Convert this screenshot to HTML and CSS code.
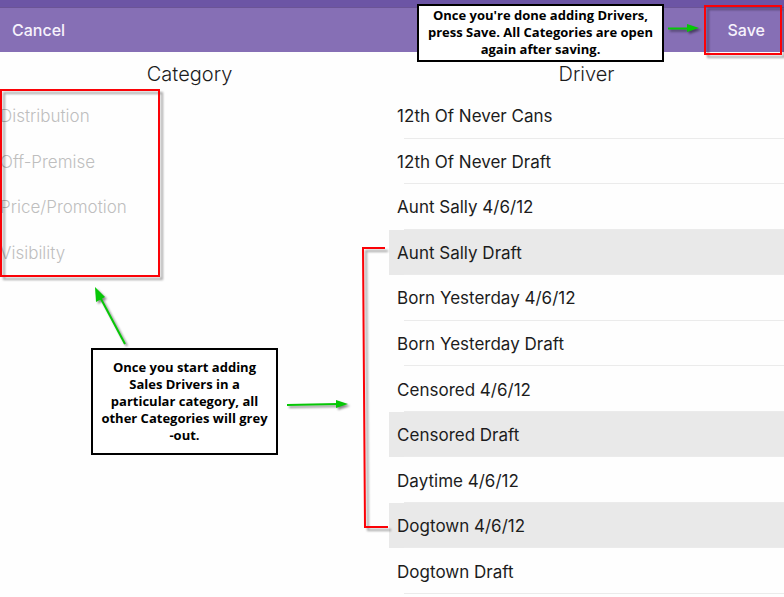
FILE: index.html
```html
<!DOCTYPE html>
<html lang="en">
<head>
<meta charset="utf-8">
<title>Sales Drivers</title>
<link rel="stylesheet" href="styles.css">
</head>
<body>
<header class="bar">
  <button type="button" class="bar-action">Cancel</button>
  <button type="button" class="bar-action">Save</button>
</header>
<main class="columns">
  <section class="column">
    <h2 class="title">Category</h2>
    <ul class="list categories">
      <li><button type="button" class="row" disabled>Distribution</button></li>
      <li><button type="button" class="row" disabled>Off-Premise</button></li>
      <li><button type="button" class="row" disabled>Price/Promotion</button></li>
      <li><button type="button" class="row" disabled>Visibility</button></li>
    </ul>
  </section>
  <section class="column">
    <h2 class="title">Driver</h2>
    <ul class="list drivers">
      <li><button type="button" class="row">12th Of Never Cans</button></li>
      <li><button type="button" class="row">12th Of Never Draft</button></li>
      <li><button type="button" class="row">Aunt Sally 4/6/12</button></li>
      <li><button type="button" class="row selected" aria-pressed="true">Aunt Sally Draft</button></li>
      <li><button type="button" class="row">Born Yesterday 4/6/12</button></li>
      <li><button type="button" class="row">Born Yesterday Draft</button></li>
      <li><button type="button" class="row">Censored 4/6/12</button></li>
      <li><button type="button" class="row selected" aria-pressed="true">Censored Draft</button></li>
      <li><button type="button" class="row">Daytime 4/6/12</button></li>
      <li><button type="button" class="row selected" aria-pressed="true">Dogtown 4/6/12</button></li>
      <li><button type="button" class="row">Dogtown Draft</button></li>
    </ul>
  </section>
</main>

<svg class="marks" width="784" height="597" viewBox="0 0 784 597" aria-hidden="true">
  <g class="frame">
    <rect x="1" y="90" width="158" height="186"/>
    <rect x="705" y="6" width="76" height="48"/>
    <path d="M385 248H363L365 527H388"/>
  </g>
  <g class="arrow">
    <path class="shaft" d="M125 344L100 297"/>
    <path class="head" d="M95 287L105 297L96 302Z"/>
    <path class="shaft" d="M287 405L338 404"/>
    <path class="head" d="M348 404L336 400V408Z"/>
    <path class="shaft" d="M668 28.500H690"/>
    <path class="head" d="M699 28L687 24V32Z"/>
  </g>
</svg>
<p class="note note-save">Once you're done adding Drivers,<br>press Save. All Categories are open<br>again after saving.</p>
<p class="note note-category">Once you start adding<br>Sales Drivers in a<br>particular category, all<br>other Categories will grey<br>-out.</p>
</body>
</html>
```
FILE: styles.css
```css
* { box-sizing: border-box; }

body {
  position: relative;
  display: flex;
  flex-direction: column;
  min-height: 100vh;
  margin: 0;
  padding-bottom: 3px;
  background: #fefefe;
  color: #1c1c1c;
  font-family: Inter, "Liberation Sans", sans-serif;
}

button {
  border: 0;
  background: none;
  color: inherit;
  font: inherit;
  text-align: left;
}

.bar {
  display: flex;
  justify-content: space-between;
  height: 52px;
  padding: 0 19px 0 12px;
  border-top: 7px solid #6c55a5;
  background: #866fb5;
  box-shadow: inset 0 1px #6b5496;
}

.bar-action {
  padding: 0;
  color: #f6f2fc;
  font-size: 16px;
  font-weight: 500;
}

.columns {
  flex: 1;
  display: grid;
  grid-template-columns: 24fr 25fr;
  gap: 10px;
}

.column {
  display: flex;
  flex-direction: column;
}

.title {
  height: 41px;
  margin: 0;
  font-size: 20px;
  font-weight: 300;
  line-height: 44px;
  text-align: center;
}

.list {
  flex: 1;
  display: grid;
  grid-template-rows: repeat(11, 1fr);
  margin: 0;
  padding: 0;
  list-style: none;
}

.list li {
  position: relative;
  display: grid;
}

.row {
  padding: 1px 8px 0;
  font-size: 17px;
}

.categories .row {
  padding: 1px 0 0;
  color: #bebebe;
  font-weight: 300;
}

.drivers li::after {
  content: "";
  position: absolute;
  right: 0;
  bottom: 0;
  left: 15px;
  border-bottom: 1px solid #ebebeb;
}

.row.selected {
  background: #e9e9e9;
}

.marks {
  position: absolute;
  top: 0;
  left: 0;
  pointer-events: none;
}

.frame {
  fill: none;
  stroke: #fb0207;
  stroke-width: 2;
  filter: drop-shadow(3px 3px 1px rgba(0, 0, 0, 0.35));
}

.arrow {
  fill: #06c706;
  filter: drop-shadow(2px 2px 1px rgba(0, 0, 0, 0.45));
}

.shaft {
  stroke: #06c706;
  stroke-width: 2;
}

.note {
  position: absolute;
  display: grid;
  align-content: center;
  margin: 0;
  border: 2px solid #000;
  background: #fff;
  color: #000;
  font-family: "Open Sans", "Noto Sans", sans-serif;
  font-size: 13px;
  font-weight: 700;
  line-height: 17px;
  text-align: center;
  white-space: nowrap;
}

.note-save {
  top: 4px;
  left: 417px;
  width: 247px;
  padding: 1px 0 2px;
}

.note-category {
  top: 348px;
  left: 91px;
  width: 187px;
  padding: 9px 0;
}
```
